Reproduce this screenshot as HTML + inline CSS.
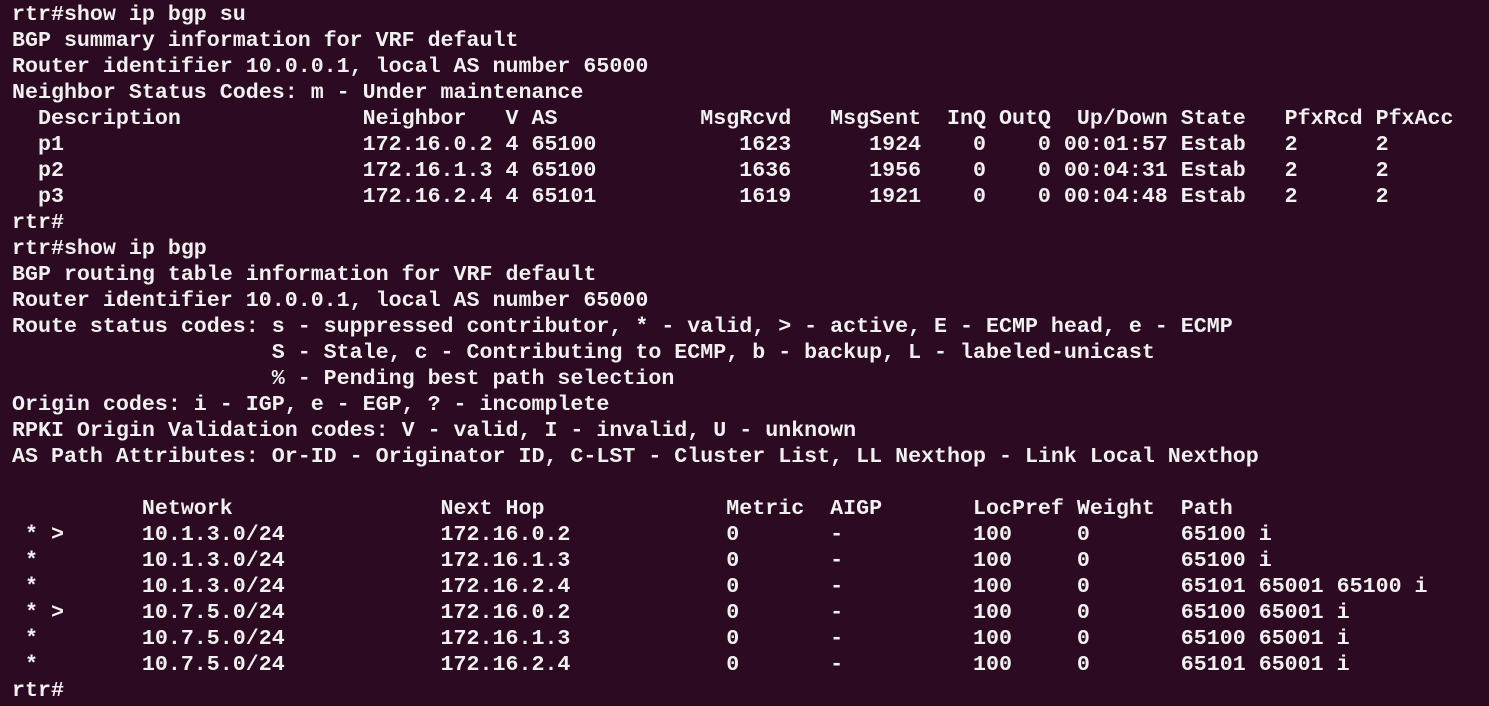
<!DOCTYPE html>
<html><head><meta charset="utf-8"><style>
html,body{margin:0;padding:0;background:#2c0a22;width:1489px;height:706px;overflow:hidden}
pre{margin:0;padding:2px 0 0 12px;font-family:"Liberation Mono",monospace;font-size:21.65px;line-height:26px;color:#f0f0f0;font-weight:bold;white-space:pre}
</style></head><body><pre>rtr#show ip bgp su
BGP summary information for VRF default
Router identifier 10.0.0.1, local AS number 65000
Neighbor Status Codes: m - Under maintenance
  Description              Neighbor   V AS           MsgRcvd   MsgSent  InQ OutQ  Up/Down State   PfxRcd PfxAcc
  p1                       172.16.0.2 4 65100           1623      1924    0    0 00:01:57 Estab   2      2
  p2                       172.16.1.3 4 65100           1636      1956    0    0 00:04:31 Estab   2      2
  p3                       172.16.2.4 4 65101           1619      1921    0    0 00:04:48 Estab   2      2
rtr#
rtr#show ip bgp
BGP routing table information for VRF default
Router identifier 10.0.0.1, local AS number 65000
Route status codes: s - suppressed contributor, * - valid, &gt; - active, E - ECMP head, e - ECMP
                    S - Stale, c - Contributing to ECMP, b - backup, L - labeled-unicast
                    % - Pending best path selection
Origin codes: i - IGP, e - EGP, ? - incomplete
RPKI Origin Validation codes: V - valid, I - invalid, U - unknown
AS Path Attributes: Or-ID - Originator ID, C-LST - Cluster List, LL Nexthop - Link Local Nexthop

          Network                Next Hop              Metric  AIGP       LocPref Weight  Path
 * &gt;      10.1.3.0/24            172.16.0.2            0       -          100     0       65100 i
 *        10.1.3.0/24            172.16.1.3            0       -          100     0       65100 i
 *        10.1.3.0/24            172.16.2.4            0       -          100     0       65101 65001 65100 i
 * &gt;      10.7.5.0/24            172.16.0.2            0       -          100     0       65100 65001 i
 *        10.7.5.0/24            172.16.1.3            0       -          100     0       65100 65001 i
 *        10.7.5.0/24            172.16.2.4            0       -          100     0       65101 65001 i
rtr#</pre></body></html>
